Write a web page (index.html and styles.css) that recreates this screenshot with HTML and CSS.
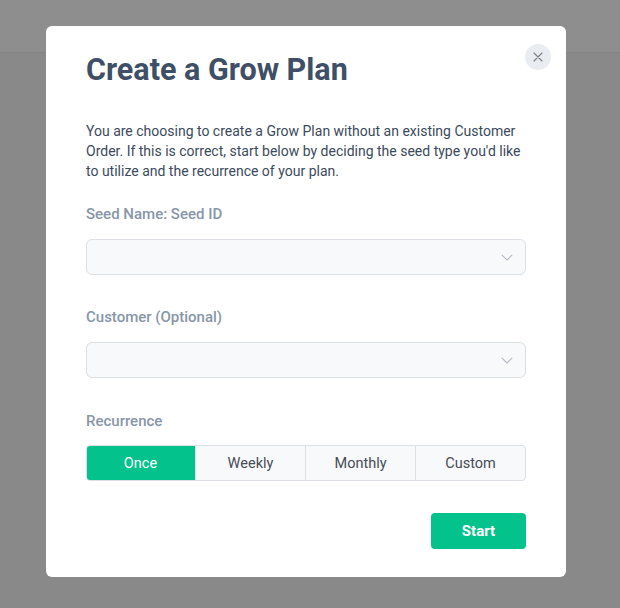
FILE: index.html
```html
<!DOCTYPE html>
<html lang="en">
<head>
<meta charset="utf-8">
<title>Create a Grow Plan</title>
<link rel="stylesheet" href="styles.css">
</head>
<body>
<div class="page">
  <div class="topbar"></div>
</div>
<div class="overlay">
  <div class="modal">
    <button class="close" aria-label="Close">
      <svg width="10" height="10" viewBox="0 0 10 10"><path d="M1 1 L9 9 M9 1 L1 9" stroke="#7a808a" stroke-width="1.1" fill="none" stroke-linecap="round"/></svg>
    </button>
    <h1 class="title">Create a Grow Plan</h1>
    <p class="intro">You are choosing to create a Grow Plan without an existing Customer Order. If this is correct, start below by deciding the seed type you'd like to utilize and the recurrence of your plan.</p>

    <div class="field">
      <label class="label">Seed Name: Seed ID</label>
      <div class="select">
        <svg class="chev" width="12" height="7" viewBox="0 0 12 7"><path d="M0.8 0.8 L6 6 L11.2 0.8" stroke="#b4bac2" stroke-width="1.1" fill="none"/></svg>
      </div>
    </div>

    <div class="field">
      <label class="label">Customer (Optional)</label>
      <div class="select">
        <svg class="chev" width="12" height="7" viewBox="0 0 12 7"><path d="M0.8 0.8 L6 6 L11.2 0.8" stroke="#b4bac2" stroke-width="1.1" fill="none"/></svg>
      </div>
    </div>

    <div class="field field-rec">
      <label class="label">Recurrence</label>
      <div class="segmented">
        <div class="seg active">Once</div>
        <div class="seg">Weekly</div>
        <div class="seg">Monthly</div>
        <div class="seg">Custom</div>
      </div>
    </div>

    <div class="actions">
      <button class="start">Start</button>
    </div>
  </div>
</div>
</body>
</html>
```

FILE: styles.css
```css
* { box-sizing: border-box; }
html, body {
  margin: 0;
  padding: 0;
  width: 620px;
  height: 608px;
  overflow: hidden;
}
body {
  background: #898989;
  font-family: Roboto, "Liberation Sans", sans-serif;
}
.page {
  height: 608px;
}
.topbar {
  height: 53px;
  background: #8e8e8e;
  border-bottom: 1px solid #848484;
}
.overlay {
  position: fixed;
  inset: 0;
  padding: 26px 0 0 46px;
}
.modal {
  position: relative;
  width: 520px;
  height: 551px;
  background: #ffffff;
  border-radius: 6px;
  padding: 27px 40px 28px 40px;
  display: flex;
  flex-direction: column;
}
.close {
  position: absolute;
  top: 18px;
  right: 15px;
  width: 26px;
  height: 26px;
  border-radius: 50%;
  border: none;
  background: #e9ecf0;
  padding: 0;
  display: flex;
  align-items: center;
  justify-content: center;
}
.title {
  margin: 0;
  font-size: 30.5px;
  line-height: 34px;
  font-weight: 700;
  color: #3e4f66;
}
.intro {
  margin: 34px 0 0 0;
  font-size: 14px;
  line-height: 20px;
  color: #3c4a5c;
}
.field {
  display: flex;
  flex-direction: column;
  gap: 15px;
  margin-top: 23px;
}
.field + .field {
  margin-top: 32px;
}
.field.field-rec {
  margin-top: 33px;
  gap: 14px;
}
.label {
  font-size: 15px;
  line-height: 20px;
  font-weight: 500;
  color: #8796a8;
}
.select {
  height: 36px;
  border: 1px solid #dcdfe4;
  border-radius: 6px;
  background: #f8f9fb;
  display: flex;
  align-items: center;
  justify-content: flex-end;
  padding-right: 12px;
}
.chev { display: block; }
.segmented {
  display: flex;
  height: 36px;
  border: 1px solid #dcdfe4;
  border-radius: 4px;
  background: #f8f9fb;
  overflow: hidden;
}
.seg {
  flex: 1;
  display: flex;
  align-items: center;
  justify-content: center;
  font-size: 14.5px;
  color: #474c55;
  border-left: 1px solid #dcdfe4;
}
.seg:first-child { border-left: none; }
.seg.active {
  background: #03c28b;
  color: #ffffff;
  margin: -1px 0 -1px -1px;
}
.actions {
  margin-top: 32px;
  display: flex;
  justify-content: flex-end;
}
.start {
  width: 95px;
  height: 36px;
  border: none;
  border-radius: 4px;
  background: #03c28b;
  color: #ffffff;
  font-family: Roboto, "Liberation Sans", sans-serif;
  font-size: 15px;
  font-weight: 700;
}
```
